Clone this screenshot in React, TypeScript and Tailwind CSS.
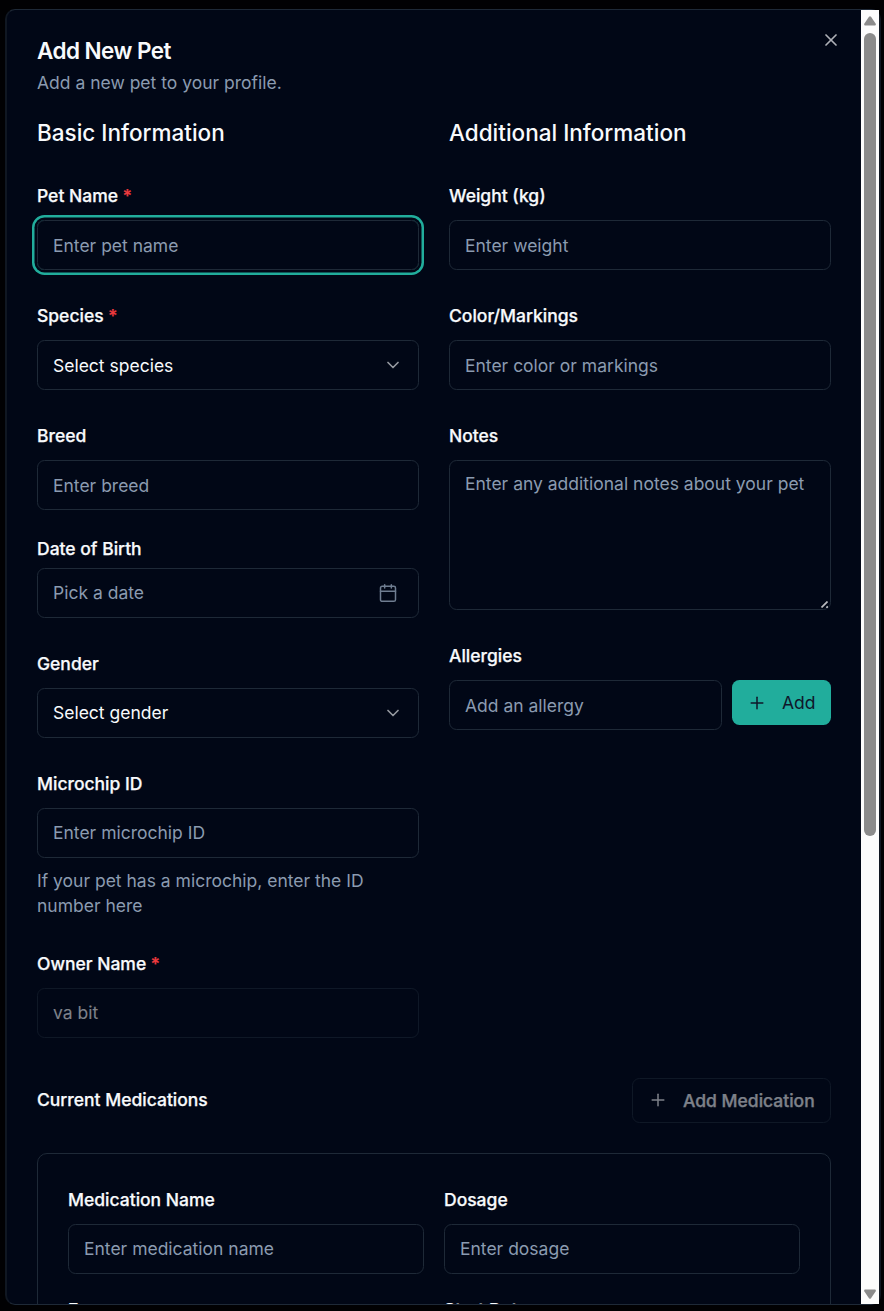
import React from "react";
import { Calendar, ChevronDown, Plus, X } from "lucide-react";

const control =
  "h-[50px] w-full min-w-0 rounded-[7.5px] border border-[#1e2937] bg-transparent px-[15px] text-[17.5px] leading-[25px] text-[#f8fafc] outline-none placeholder:text-[#8b9bb0]";

function Label({ text, required }: { text: string; required?: boolean }) {
  return (
    <span className="block h-[25px] text-[17.5px] leading-[25px] font-medium whitespace-nowrap text-[#f8fafc] [-webkit-text-stroke:0.25px]">
      {text}
      {required && <span className="text-[#ef3b3f]"> *</span>}
    </span>
  );
}

function Field({ label, required, children }: { label: string; required?: boolean; children: React.ReactNode }) {
  return (
    <div className="flex min-w-0 flex-col gap-3">
      <Label text={label} required={required} />
      {children}
    </div>
  );
}

function SelectBox({ text, raised }: { text: string; raised?: boolean }) {
  return (
    <button className={control + " flex items-center justify-between"}>
      <span className={raised ? "pb-0.5" : ""}>{text}</span>
      <ChevronDown className="size-5 opacity-60" strokeWidth={2} />
    </button>
  );
}

function Scrollbar() {
  return (
    <div className="flex w-[18px] shrink-0 flex-col items-center bg-[#fcfcfc]">
      <svg className="mt-1.5 h-[10px] w-3" viewBox="0 0 12 10" fill="#8b8b8b">
        <path d="M5 0.8Q6 -0.4 7 0.8L11.6 7.6Q12.4 9.4 10.8 9.5H1.2Q-0.4 9.4 0.4 7.6Z" />
      </svg>
      <div className="mt-[7px] h-[803px] w-3 rounded-full bg-[#8b8b8b]" />
      <svg className="mt-auto mb-[5px] h-[10px] w-3" viewBox="0 0 12 10" fill="#8b8b8b">
        <path d="M5 9.2Q6 10.4 7 9.2L11.6 2.4Q12.4 0.6 10.8 0.5H1.2Q-0.4 0.6 0.4 2.4Z" />
      </svg>
    </div>
  );
}

export default function App() {
  return (
    <div className="h-[1311px] w-[884px] overflow-hidden bg-[#010103] pt-[9px] pl-[5px] font-['Inter',sans-serif]">
      <div className="h-[1296px] w-[876px] rounded-[10px] border-x-2 border-y border-x-[#101722] border-y-[#1e2937] bg-[#010716]">
        <div className="flex h-[1294px] overflow-hidden">
          <div className="relative w-[854px] shrink-0 pt-[27px] pr-[30px] pl-[30px]">
            <button className="absolute top-5 right-5 text-[#f8fafc] opacity-70">
              <X className="size-5" />
            </button>
            <h2 className="text-[22.5px] leading-7 font-semibold tracking-[-0.5625px] text-[#f8fafc]">Add New Pet</h2>
            <p className="mt-[5px] text-[17.5px] leading-[25px] text-[#8b9bb0]">Add a new pet to your profile.</p>

            <div className="mt-5 grid grid-cols-2 gap-[30px]">
              <section>
                <h3 className="mb-[33px] text-[22.5px] leading-[35px] font-medium text-[#f8fafc]">Basic Information</h3>
                <div className="flex flex-col gap-[33px]">
                  <Field label="Pet Name" required>
                    <input
                      className={control + " shadow-[0_0_0_2.5px_#010716,0_0_0_5px_#21ad9c]"}
                      placeholder="Enter pet name"
                    />
                  </Field>
                  <Field label="Species" required>
                    <SelectBox text="Select species" />
                  </Field>
                  <Field label="Breed">
                    <input className={control} placeholder="Enter breed" />
                  </Field>
                  <div className="-mt-[7px] flex flex-col gap-[7px]">
                    <Label text="Date of Birth" />
                    <button className={control + " flex items-center justify-between"}>
                      <span className="pb-0.5 text-[#8b9bb0]">Pick a date</span>
                      <Calendar className="mr-[5px] size-5 text-[#8b9bb0] opacity-80" strokeWidth={1.8} />
                    </button>
                  </div>
                  <Field label="Gender">
                    <SelectBox text="Select gender" raised />
                  </Field>
                  <div>
                    <Field label="Microchip ID">
                      <input className={control + " pb-0.5"} placeholder="Enter microchip ID" />
                    </Field>
                    <p className="mt-2.5 text-[17.5px] leading-[25px] text-[#8b9bb0]">
                      If your pet has a microchip, enter the ID number here
                    </p>
                  </div>
                  <Field label="Owner Name" required>
                    <input className={control + " pb-0.5 opacity-50"} defaultValue="va bit" disabled />
                  </Field>
                </div>
              </section>

              <section>
                <h3 className="mb-[33px] text-[22.5px] leading-[35px] font-medium text-[#f8fafc]">
                  Additional Information
                </h3>
                <div className="flex flex-col gap-[33px]">
                  <Field label="Weight (kg)">
                    <input className={control} placeholder="Enter weight" />
                  </Field>
                  <Field label="Color/Markings">
                    <input className={control} placeholder="Enter color or markings" />
                  </Field>
                  <Field label="Notes">
                    <div className="relative h-[150px]">
                      <textarea
                        className="block h-[150px] w-full resize-none rounded-[7.5px] border border-[#1e2937] bg-transparent px-[15px] py-[10px] text-[17.5px] leading-[25px] text-[#f8fafc] outline-none placeholder:text-[#8b9bb0]"
                        placeholder="Enter any additional notes about your pet"
                      />
                      <svg
                        className="absolute right-[3px] bottom-0.5 size-[7px]"
                        viewBox="0 0 7 7"
                        stroke="#b9bbbf"
                        strokeWidth="1.7"
                      >
                        <path d="M0.5 6.5L6.5 0.5M5.4 6.8L6.8 5.4" />
                      </svg>
                    </div>
                  </Field>
                  <Field label="Allergies">
                    <div className="flex items-start gap-2.5">
                      <input className={control + " flex-1"} placeholder="Add an allergy" />
                      <button className="flex h-[45px] w-[99px] shrink-0 items-center rounded-[7.5px] bg-[#21ad9c] pl-[15px] text-[17.5px] font-normal text-[#0f172a]">
                        <Plus className="mr-[15px] size-5" strokeWidth={1.8} />
                        <span className="pt-px">Add</span>
                      </button>
                    </div>
                  </Field>
                </div>
              </section>
            </div>

            <div className="mt-10 flex h-[45px] items-center justify-between">
              <div className="pb-0.5">
                <Label text="Current Medications" />
              </div>
              <button className="flex h-[45px] w-[199px] items-center rounded-[7.5px] border border-[#1e2937] pl-[15px] text-[17.5px] font-medium whitespace-nowrap text-[#f8fafc] opacity-50 [-webkit-text-stroke:0.25px]">
                <Plus className="mr-[15px] mb-px size-5" strokeWidth={1.8} />
                <span className="pt-px">Add Medication</span>
              </button>
            </div>

            <div className="mt-[30px] h-[200px] rounded-[10px] border border-[#1e2937] p-[30px]">
              <div className="mt-[3px] grid grid-cols-2 gap-x-5 gap-y-[23px]">
                <Field label="Medication Name">
                  <input className={control + " pb-0.5"} placeholder="Enter medication name" />
                </Field>
                <Field label="Dosage">
                  <input className={control + " pb-0.5"} placeholder="Enter dosage" />
                </Field>
                <Label text="Frequency" />
                <Label text="Start Date" />
              </div>
            </div>
          </div>
          <Scrollbar />
        </div>
      </div>
    </div>
  );
}
